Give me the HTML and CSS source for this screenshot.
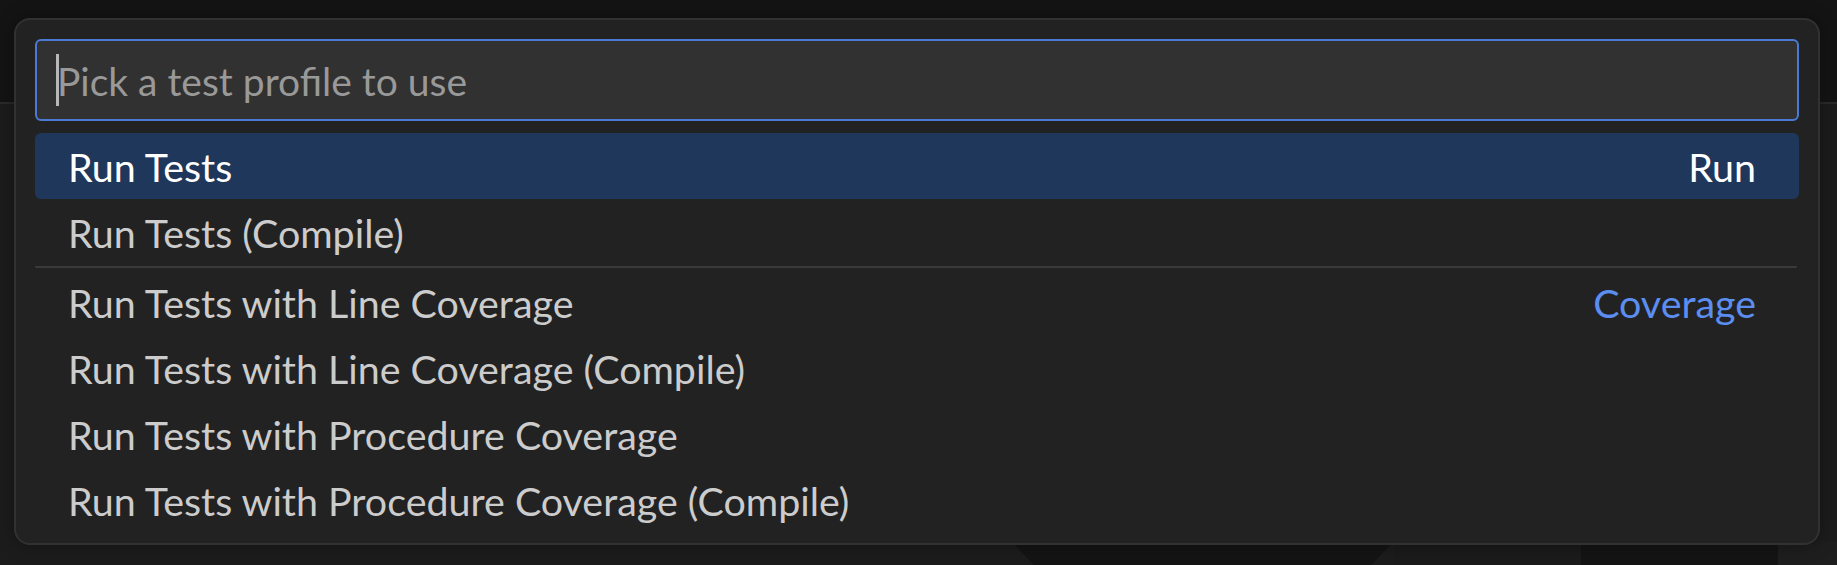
FILE: index.html
```html
<!DOCTYPE html>
<html lang="en">
<head>
<meta charset="utf-8">
<title>Pick a test profile</title>
<link rel="stylesheet" href="styles.css">
</head>
<body>
<div class="workbench">
  <div class="titlebar"></div>
  <div class="main">
    <div class="fill"></div>
    <div class="bottom-strip">
      <div class="seg seg-a"></div>
      <div class="seg seg-b"></div>
      <div class="seg seg-c"></div>
      <div class="seg seg-d"></div>
      <div class="seg seg-e"></div>
    </div>
  </div>
</div>

<div class="quick-input">
  <div class="input-box">
    <span class="caret"></span>
    <span class="placeholder">Pick a test profile to use</span>
  </div>
  <div class="list">
    <div class="row selected"><span class="label">Run Tests</span><span class="group">Run</span></div>
    <div class="row"><span class="label">Run Tests (Compile)</span></div>
    <div class="separator"></div>
    <div class="row"><span class="label">Run Tests with Line Coverage</span><span class="group">Coverage</span></div>
    <div class="row"><span class="label">Run Tests with Line Coverage (Compile)</span></div>
    <div class="row"><span class="label">Run Tests with Procedure Coverage</span></div>
    <div class="row"><span class="label">Run Tests with Procedure Coverage (Compile)</span></div>
  </div>
</div>
</body>
</html>
```

FILE: styles.css
```css
html, body {
  margin: 0;
  padding: 0;
  width: 1837px;
  height: 565px;
  overflow: hidden;
  background: #1c1c1c;
  font-family: Lato, "Open Sans", sans-serif;
}

.workbench {
  display: flex;
  flex-direction: column;
  height: 565px;
}

.titlebar {
  height: 102px;
  background: #141414;
  border-bottom: 2px solid #2a2a2a;
  flex: none;
}

.main {
  flex: 1;
  display: flex;
  flex-direction: column;
  background: #1c1c1c;
}

.fill {
  flex: 1;
}

.bottom-strip {
  height: 24px;
  display: flex;
}

.seg { height: 100%; flex: none; }
.seg-a { width: 1011px; background: #1c1c1c; }
.seg-b {
  width: 383px;
  background: #141414;
  clip-path: polygon(0 0, 100% 0, 94% 100%, 6% 100%);
}
.seg-c { width: 187px; background: #1b1b1b; }
.seg-d { width: 197px; background: #141414; }
.seg-e { flex: 1; background: #1e1e1e; }

.quick-input {
  position: absolute;
  left: 14px;
  top: 18px;
  width: 1806px;
  height: 527px;
  box-sizing: border-box;
  background: #222222;
  border: 2px solid #313131;
  border-radius: 16px;
  padding: 19px 19px 0 19px;
  box-shadow: 0 0 18px rgba(0, 0, 0, 0.35);
  display: flex;
  flex-direction: column;
}

.input-box {
  height: 82px;
  box-sizing: border-box;
  background: #313131;
  border: 2px solid #4a7bd2;
  border-radius: 6px;
  padding-left: 19px;
  display: flex;
  align-items: center;
  flex: none;
}

.caret {
  width: 3px;
  height: 52px;
  background: #b8b8b8;
  flex: none;
}

.placeholder {
  font-size: 39px;
  line-height: 78px;
  padding-top: 2px;
  color: #999999;
  margin-left: -2px;
}

.list {
  margin-top: 12px;
  display: flex;
  flex-direction: column;
}

.row {
  height: 66px;
  box-sizing: border-box;
  display: flex;
  align-items: center;
  justify-content: space-between;
  padding: 2px 43px 0 33px;
  border-radius: 6px;
  font-size: 39.4px;
  line-height: 64px;
  color: #cccccc;
}

.row.selected {
  background: #1f375b;
  color: #ffffff;
}

.group {
  color: #5b8ef0;
}

.row.selected .group {
  color: #ffffff;
}

.separator {
  height: 2px;
  background: #3a3a3a;
  margin: 1px 2px 1px 0;
  border-radius: 1px;
}
```
